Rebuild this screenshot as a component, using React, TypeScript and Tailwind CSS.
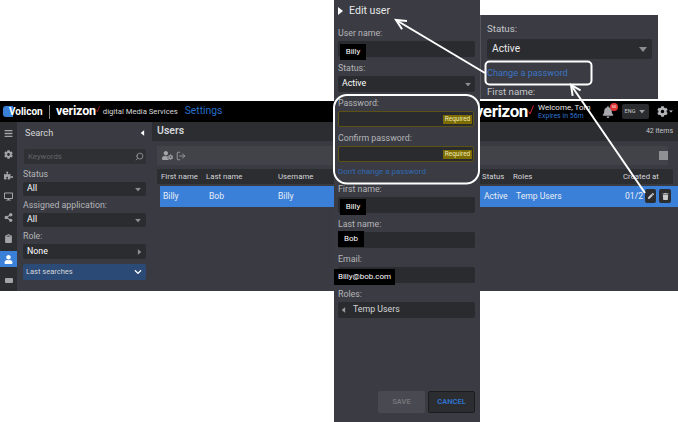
import React from "react";
import { FaBars, FaCog, FaPuzzlePiece, FaDesktop, FaShareAlt, FaClipboard, FaUser, FaBell, FaPen, FaTrash, FaUserCog, FaChevronDown } from "react-icons/fa";
import { LogOut, Search } from "lucide-react";

const font = { fontFamily: 'Roboto, "Liberation Sans", sans-serif' };

function Caret({ dir = "down", className = "" }: { dir?: "down" | "left" | "right"; className?: string }) {
  const pts = dir === "down" ? "0,0 8,0 4,5" : dir === "left" ? "5,0 5,8 0,4" : "0,0 5,4 0,8";
  const w = dir === "down" ? 8 : 5;
  const h = dir === "down" ? 5 : 8;
  return (
    <svg width={w} height={h} viewBox={`0 0 ${w} ${h}`} className={className} fill="currentColor">
      <polygon points={pts} />
    </svg>
  );
}

function Check({ w, h }: { w: number; h: number }) {
  return (
    <svg width={w} height={h} viewBox="0 0 6 10" className="shrink-0" fill="none" stroke="#d8232a" strokeWidth="1">
      <path d="M0.5 6.5 L2 9 L5.5 0.5" />
    </svg>
  );
}

function NavItem({ children, active }: { children: React.ReactNode; active?: boolean }) {
  return (
    <div className={`h-4 flex items-center justify-center ${active ? "bg-[#3a80d8] text-white" : "text-[#a3a4a8]"}`}>
      {children}
    </div>
  );
}

function SearchSelect({ label, value, caret = "down", tall }: { label: string; value: string; caret?: "down" | "right"; tall?: boolean }) {
  return (
    <div>
      <div className="h-[16px] flex items-center text-[8.8px] text-[#b4b5b9] leading-none">{label}</div>
      <div className={`${tall ? "h-[15px]" : "h-[14px]"} rounded-[2px] bg-[#2b2c30] flex items-center justify-between pl-[4px] pr-[4px] text-[8.8px] text-white`}>
        <span>{value}</span>
        <Caret dir={caret} className="text-[#8c8d91] scale-75" />
      </div>
    </div>
  );
}

function FieldLabel({ children }: { children: React.ReactNode }) {
  return <div className="h-4 flex items-center pl-[4px] text-[8.8px] leading-none text-[#b4b5b9]">{children}</div>;
}

function Input({ children, className = "" }: { children?: React.ReactNode; className?: string }) {
  return <div className={`relative h-4 ml-[4px] mr-[5px] rounded-[2px] bg-[#2a2b2e] ${className}`}>{children}</div>;
}

function Redacted({ text, className }: { text: string; className: string }) {
  return (
    <div className={`absolute bg-black h-4 flex items-center justify-center text-[8px] leading-none text-white ${className}`}>{text}</div>
  );
}

function PasswordField({ label }: { label: string }) {
  return (
    <div>
      <FieldLabel>{label}</FieldLabel>
      <div className="h-4 ml-[4px] mr-[6px] rounded-[2px] bg-[#2a2b2e] border border-[#5c5214] flex items-center justify-end pr-[1px]">
        <span className="h-[9px] w-[29px] bg-[#7d6d00] text-[6.5px] leading-none text-[#efe9b8] flex items-center justify-center">Required</span>
      </div>
    </div>
  );
}

function EditPanel() {
  return (
    <div className="absolute left-[334px] top-0 w-[146px] h-[422px] bg-[#3b3c43] flex flex-col gap-[3px]">
      <div className="h-[22px] flex items-center pl-[4px] gap-[6px] text-white">
        <Caret dir="right" className="text-white" />
        <span className="text-[10.6px] text-[#e6e6e8] leading-none">Edit user</span>
      </div>
      <div>
        <FieldLabel>User name:</FieldLabel>
        <Input><Redacted text="Billy" className="left-[2px] top-[3px] w-[26px]" /></Input>
      </div>
      <div>
        <FieldLabel>Status:</FieldLabel>
        <Input className="flex items-center justify-between pl-[4px] pr-[3px] text-[8.8px] text-white">
          <span>Active</span>
          <Caret className="text-[#8c8d91] scale-75" />
        </Input>
      </div>
      <PasswordField label="Password:" />
      <PasswordField label="Confirm password:" />
      <div className="h-4 -mt-[3px] pt-[3px] flex items-center pl-[4px] text-[7.9px] leading-none text-[#2f69b5]">Don't change a password</div>
      <div>
        <FieldLabel>First name:</FieldLabel>
        <Input><Redacted text="Billy" className="left-[2px] top-[2px] w-[26px]" /></Input>
      </div>
      <div>
        <FieldLabel>Last name:</FieldLabel>
        <Input><Redacted text="Bob" className="left-0 top-[-1px] w-[26px]" /></Input>
      </div>
      <div>
        <FieldLabel>Email:</FieldLabel>
        <Input><Redacted text="Billy@bob.com" className="left-[-4px] top-[2px] w-[61px]" /></Input>
      </div>
      <div>
        <FieldLabel>Roles:</FieldLabel>
        <Input className="flex items-center pl-[3px] gap-[7px] text-[8.8px] text-[#d4d5d8]">
          <Caret dir="left" className="text-[#9a9b9f] scale-75" />
          <span>Temp Users</span>
        </Input>
      </div>
      <div className="mt-auto mb-[9px] flex justify-end gap-[3px] pr-[5px]">
        <div className="w-[47px] h-[22px] rounded-[2px] bg-[#494a51] flex items-center justify-center text-[7.5px] font-semibold text-[#75767c]">SAVE</div>
        <div className="w-[47px] h-[22px] rounded-[2px] bg-[#2c2d31] border border-[#1b1b1d] flex items-center justify-center text-[7.5px] font-semibold text-[#2f74cf]">CANCEL</div>
      </div>
    </div>
  );
}

function PasswordPopup() {
  return (
    <div className="absolute left-[480px] top-[15px] w-[178px] h-[84px] bg-[#3b3c43] border-l border-[#55565c] pl-[6px] pr-[6px]">
      <div className="h-[24px] pt-[3px] flex items-center text-[9.7px] leading-none text-[#c4c5c9]">Status:</div>
      <div className="h-[20px] rounded-[2px] bg-[#2b2c30] flex items-center justify-between pl-[5px] pr-[5px] text-[10.2px] text-[#e9e9ea]">
        <span>Active</span>
        <Caret className="text-[#8c8d91]" />
      </div>
      <div className="h-[28px] flex items-center text-[9.2px] leading-none text-[#3a74c4]">Change a password</div>
      <div className="h-[10px] text-[9.7px] leading-[10px] text-[#c4c5c9]">First name:</div>
    </div>
  );
}

function TopBar() {
  return (
    <div className="h-[21px] bg-black flex items-center pl-[3px] pr-[5px] text-white">
      <div className="flex items-center w-[46px]">
        <div className="w-[10px] h-[11px] rounded-l-[3px] bg-[#3a80d8]" />
        <span className="-ml-[4px] text-[10px] font-bold leading-none">Volicon</span>
      </div>
      <div className="w-px h-[14px] bg-[#8a8a8a]" />
      <span className="ml-[6px] text-[12.5px] font-bold leading-none tracking-[-0.2px]">verizon</span>
      <div className="-mt-[5px]"><Check w={4} h={8} /></div>
      <span className="ml-[3px] mt-[1px] text-[7.7px] leading-none text-[#d8d8d8]">digital Media Services</span>
      <span className="ml-[7px] text-[10.3px] leading-none text-[#2a6fc9]">Settings</span>

      <div className="ml-auto flex items-center">
        <span className="text-[17px] font-bold leading-none tracking-[-0.4px]">verizon</span>
        <div className="-mt-[4px] mr-[4px]"><Check w={6} h={12} /></div>
        <div className="w-[64px] flex flex-col text-[8px] leading-[9px]">
          <span className="text-[#e6e6e6]">Welcome, Tom</span>
          <span className="text-[#2f74cf] text-[7px] leading-[8px]">Expires in 56m</span>
        </div>
        <div className="relative text-[#a9aaae]">
          <FaBell size={12} />
          <span className="absolute -top-[3px] -right-[4px] w-[8px] h-[8px] rounded-full bg-[#e03434] text-[4px] leading-[8px] text-center text-white">50</span>
        </div>
        <div className="ml-[8px] w-[27px] h-[15px] rounded-[2px] bg-[#2b2c30] flex items-center justify-center gap-[3px] text-[5.5px] text-[#c9cacc]">
          <span>ENG</span>
          <Caret className="text-[#9a9b9f] scale-75" />
        </div>
        <div className="ml-[8px] flex items-center gap-[1px] text-[#b4b5b9]">
          <FaCog size={11} />
          <Caret className="scale-50 -mx-[2px]" />
        </div>
      </div>
    </div>
  );
}

function Sidebar() {
  return (
    <div className="w-[17px] bg-[#2c2d31] pt-[3px] flex flex-col gap-[5px]">
      <NavItem><FaBars size={9} /></NavItem>
      <NavItem><FaCog size={9} /></NavItem>
      <NavItem><FaPuzzlePiece size={9} /></NavItem>
      <NavItem><FaDesktop size={9} /></NavItem>
      <NavItem><FaShareAlt size={9} /></NavItem>
      <NavItem><FaClipboard size={9} /></NavItem>
      <NavItem active><FaUser size={9} /></NavItem>
      <NavItem><div className="w-[8px] h-[5px] rounded-[1px] bg-[#a3a4a8]" /></NavItem>
    </div>
  );
}

function SearchPanel() {
  return (
    <div className="w-[135px] bg-[#3a3b42] pl-[6px] pr-[6px]">
      <div className="h-[22px] flex items-center justify-between pl-[2px] pr-[1px] text-[9.2px] leading-none text-[#d4d5d8]">
        <span>Search</span>
        <Caret dir="left" className="text-white scale-75" />
      </div>
      <div className="mt-[5px] ml-[1px] h-[15px] rounded-[2px] bg-[#2f3034] flex items-center justify-between pl-[4px] pr-[2px] text-[7.8px] text-[#63646a]">
        <span>Keywords</span>
        <Search size={9} className="text-[#a3a4a8] -scale-x-100" />
      </div>
      <div className="mt-[2px]"><SearchSelect label="Status" value="All" /></div>
      <div className="mt-[1px]"><SearchSelect label="Assigned application:" value="All" /></div>
      <div className="mt-[1px]"><SearchSelect label="Role:" value="None" caret="right" tall /></div>
      <div className="mt-[5px] h-[16px] rounded-[2px] bg-[#2b4a75] flex items-center justify-between pl-[3px] pr-[4px] text-[7.5px] text-[#d4d5d8]">
        <span>Last searches</span>
        <FaChevronDown size={8} className="text-white" />
      </div>
    </div>
  );
}

function UsersMain() {
  return (
    <div className="flex-1 min-w-0 bg-[#3a3b42] flex flex-col">
      <div className="h-[19px] bg-[#2c2d31] flex items-center justify-between pl-[5px] pr-[5px]">
        <span className="text-[10.5px] font-semibold leading-none text-[#d4d5d8]">Users</span>
        <span className="text-[7px] text-[#c4c5c9]">42 items</span>
      </div>
      <div className="mt-[5px] ml-[5px] mr-[10px] h-[19px] bg-[#424349] flex items-center justify-between pl-[5px] text-[#a3a4a8]">
        <div className="flex items-center gap-[3px]">
          <FaUserCog size={11} />
          <LogOut size={10} />
        </div>
        <div className="w-[9px] h-[9px] bg-[#8f9094]" />
      </div>
      <div className="mt-[4px] ml-[5px] mr-[5px] h-[15px] bg-[#2c2d31] grid grid-cols-[45px_72px_204px_31px_110px_1fr] items-center pl-[4px] text-[7.8px] text-[#d4d5d8]">
        <span>First name</span>
        <span>Last name</span>
        <span>Username</span>
        <span>Status</span>
        <span>Roles</span>
        <span>Created at</span>
      </div>
      <div className="relative mt-[2px] ml-[8px] h-[21px] bg-[#3a80d8] grid grid-cols-[46px_69px_206px_32px_109px_1fr] items-center pl-[3px] text-[8.6px] text-[#e9eef7]">
        <span>Billy</span>
        <span>Bob</span>
        <span>Billy</span>
        <span>Active</span>
        <span>Temp Users</span>
        <span>01/2</span>
        <div className="absolute right-[7px] top-[3px] flex gap-[3px]">
          <div className="w-[11px] h-[14px] rounded-[2px] bg-[#2c2d31] flex items-center justify-center text-[#c9cacc]"><FaPen size={6} /></div>
          <div className="w-[12px] h-[14px] rounded-[2px] bg-[#2c2d31] flex items-center justify-center text-[#c9cacc]"><FaTrash size={7} /></div>
        </div>
      </div>
    </div>
  );
}

function Annotations() {
  const arrow = (x1: number, y1: number, x2: number, y2: number) => {
    const a = Math.atan2(y2 - y1, x2 - x1);
    const L = 11;
    const s = 0.45;
    const p1 = `${x2 - L * Math.cos(a - s)},${y2 - L * Math.sin(a - s)}`;
    const p2 = `${x2 - L * Math.cos(a + s)},${y2 - L * Math.sin(a + s)}`;
    return (
      <g>
        <line x1={x1} y1={y1} x2={x2} y2={y2} />
        <polyline points={`${p1} ${x2},${y2} ${p2}`} />
      </g>
    );
  };
  return (
    <svg className="absolute inset-0 pointer-events-none" width="678" height="422" fill="none" stroke="#fff" strokeWidth="2">
      <rect x="334" y="95" width="145" height="88.5" rx="13" />
      <rect x="485.5" y="61.5" width="106" height="23" rx="4" />
      {arrow(485, 73, 396, 20)}
      {arrow(645, 193, 571, 85)}
    </svg>
  );
}

export default function App() {
  return (
    <div className="relative w-[678px] h-[422px] bg-white overflow-hidden" style={font}>
      <div className="absolute left-0 top-[101px] w-[678px] h-[190px] flex flex-col">
        <TopBar />
        <div className="flex-1 flex min-h-0">
          <Sidebar />
          <SearchPanel />
          <UsersMain />
        </div>
      </div>
      <PasswordPopup />
      <EditPanel />
      <Annotations />
    </div>
  );
}
